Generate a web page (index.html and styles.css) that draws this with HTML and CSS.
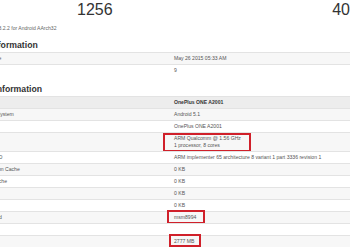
FILE: index.html
```html
<!DOCTYPE html>
<html lang="en">
<head>
<meta charset="utf-8">
<title>Geekbench result</title>
<link rel="stylesheet" href="styles.css">
</head>
<body>
<div class="scores">
  <span class="score">1256</span>
  <span class="score">40</span>
</div>
<div class="page">
  <p class="version">Geekbench 3.2.2 for Android AArch32</p>
  <h3 class="section-title">Result Information</h3>
  <table class="info">
    <tr class="odd"><td class="label">Upload Date</td><td>May 26 2015 05:33 AM</td></tr>
    <tr><td class="label">Views</td><td>9</td></tr>
  </table>
  <h3 class="section-title">System Information</h3>
  <table class="info">
    <tr class="head"><td class="label"></td><td class="strong">OnePlus ONE A2001</td></tr>
    <tr class="odd"><td class="label">Operating System</td><td>Android 5.1</td></tr>
    <tr><td class="label">Model</td><td>OnePlus ONE A2001</td></tr>
    <tr class="odd"><td class="label">Processor</td><td><div class="mark mark-cpu">ARM Qualcomm @ 1.56 GHz<br>1 processor, 8 cores</div></td></tr>
    <tr><td class="label">Processor ID</td><td>ARM implementer 65 architecture 8 variant 1 part 3336 revision 1</td></tr>
    <tr class="odd"><td class="label">L1 Instruction Cache</td><td>0 KB</td></tr>
    <tr><td class="label">L1 Data Cache</td><td>0 KB</td></tr>
    <tr class="odd"><td class="label">L2 Cache</td><td>0 KB</td></tr>
    <tr><td class="label">L3 Cache</td><td>0 KB</td></tr>
    <tr class="odd"><td class="label">Motherboard</td><td><div class="mark mark-mb">msm8994</div></td></tr>
    <tr><td class="label">BIOS</td><td></td></tr>
    <tr class="odd"><td class="label">Memory</td><td><div class="mark mark-mem">2777 MB</div></td></tr>
  </table>
</div>
</body>
</html>
```

FILE: styles.css
```css
html, body {
  margin: 0;
  padding: 0;
  background: #ffffff;
  overflow: hidden;
}

body {
  width: 350px;
  height: 250px;
  font-family: "Liberation Sans", Arial, sans-serif;
  color: #555555;
}

.scores {
  display: flex;
  justify-content: space-between;
  padding-left: 77px;
  height: 20px;
}

.score {
  font-size: 16px;
  line-height: 20px;
  color: #333333;
}

.page {
  margin-left: -29px;
  width: 420px;
}

.version {
  margin: 4px 0 0 0;
  font-size: 5.1px;
  line-height: 8px;
  color: #666666;
}

.section-title {
  margin: 8px 0 2px -10px;
  font-size: 8.7px;
  line-height: 10px;
  font-weight: bold;
  color: #333333;
}

.info {
  border-collapse: separate;
  border-spacing: 0;
  width: 400px;
  table-layout: fixed;
  font-size: 5.1px;
  color: #555555;
}

.info td {
  padding: 2px 3px;
  line-height: 7px;
  border-top: 1px solid #e3e3e3;
  vertical-align: top;
  white-space: nowrap;
}

.info td.label {
  width: 195px;
  padding-left: 2px;
}

.info tr.odd td {
  background: #f7f7f7;
}

.info tr.head td {
  background: #ededed;
}

.info td.strong {
  font-weight: bold;
  color: #333333;
}

.mark {
  display: block;
  width: fit-content;
  border: 2px solid #d0202a;
}

.mark-cpu {
  padding: 0 8px 1px 9px;
  margin: -2px -10px -3px -11px;
}

.mark-mb {
  padding: 2px 7px 1px 5px;
  margin: -4px -9px -3px -7px;
}

.mark-mem {
  padding: 2px 5px 0 3px;
  margin: -4px -7px -2px -5px;
}
```
